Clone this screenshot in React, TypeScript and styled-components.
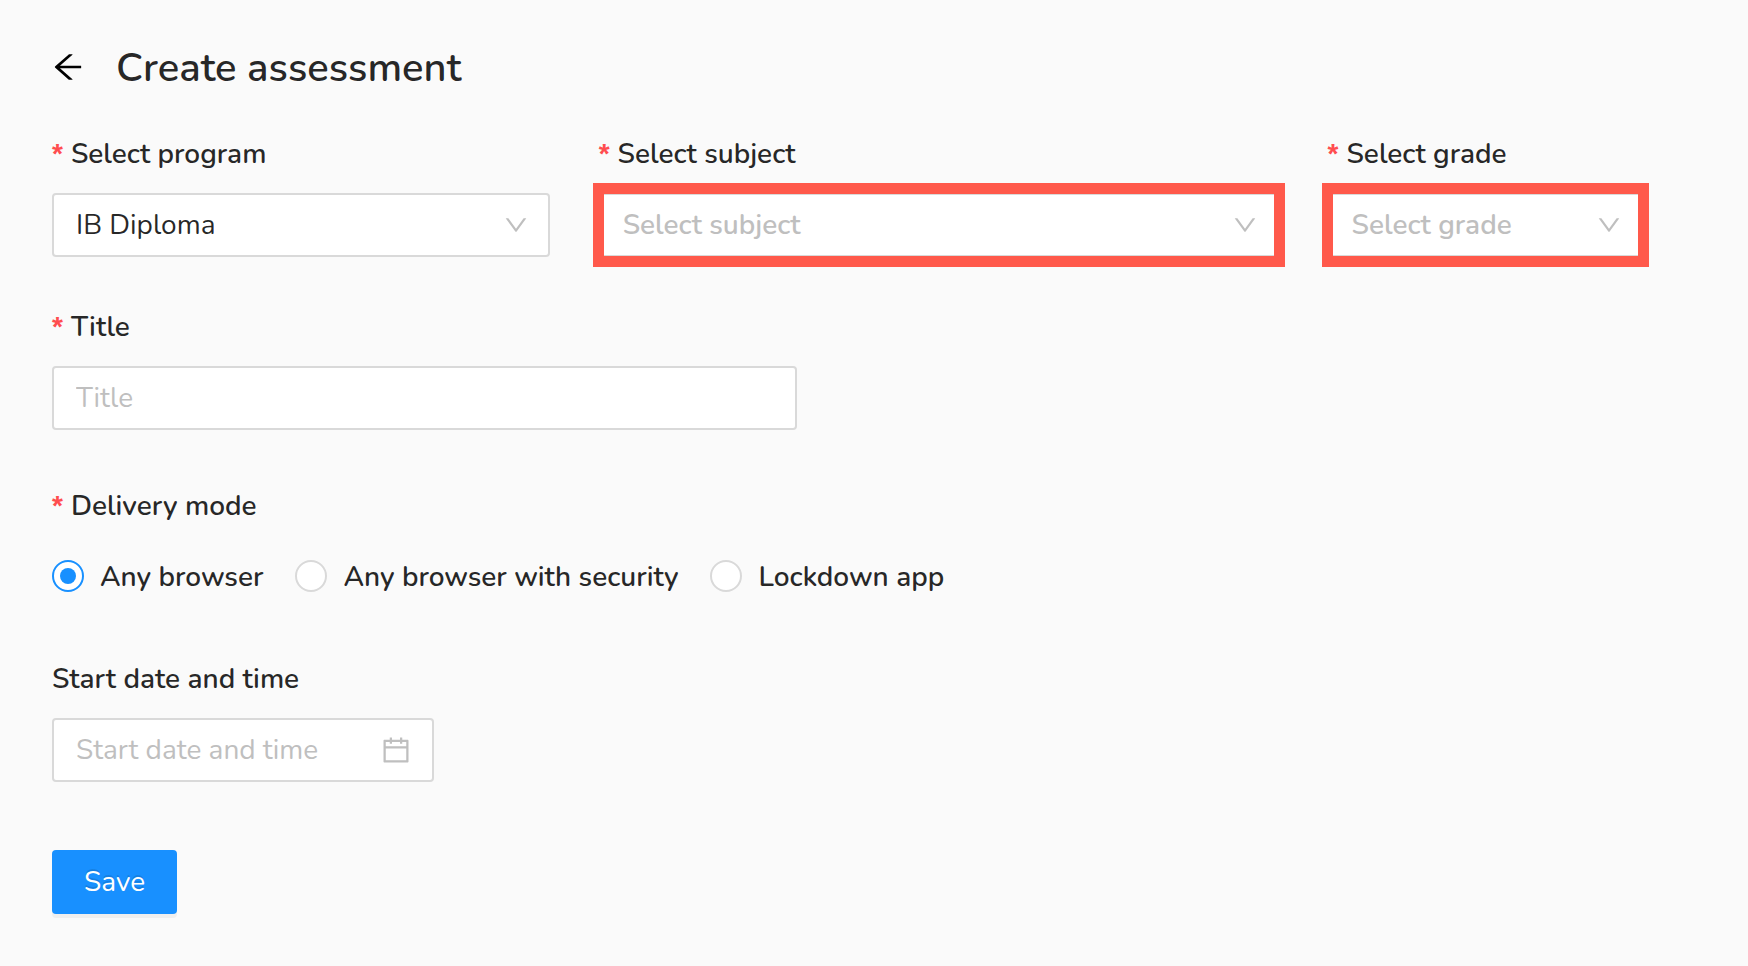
import React, { useState } from "react";
import styled, { createGlobalStyle } from "styled-components";

const colors = {
  page: "#fafafa",
  text: "rgba(0, 0, 0, 0.85)",
  placeholder: "#bfbfbf",
  border: "#d9d9d9",
  primary: "#1890ff",
  required: "#ff4d4f",
  highlight: "#ff594b",
};

const GlobalStyle = createGlobalStyle`
  *, *::before, *::after { box-sizing: border-box; }
  body {
    margin: 0;
    background: ${colors.page};
    color: ${colors.text};
    font-family: Nunito, Lato, sans-serif;
    font-size: 28px;
    line-height: 44px;
  }
  input, select, button { font: inherit; color: inherit; }
`;

const Page = styled.main`
  padding: 41px 56px 48px 52px;
`;

const Header = styled.header`
  display: flex;
  align-items: center;
  gap: 32px;
  margin-bottom: 37px;
`;

const BackButton = styled.button`
  display: flex;
  padding: 0 0 2px;
  border: 0;
  background: none;
  color: #000;
  cursor: pointer;
`;

const Heading = styled.h1`
  margin: 0;
  font-size: 40px;
  font-weight: 600;
  line-height: 54px;
`;

const Form = styled.form`
  display: flex;
  flex-direction: column;
`;

const FieldRow = styled.div`
  display: grid;
  grid-template-columns: 6fr 8fr 4fr;
`;

const Field = styled.div<{ $space?: number }>`
  min-width: 0;
  padding-right: 49px;
  margin-bottom: ${(p) => p.$space ?? 48}px;
`;

const RadioField = styled.fieldset`
  min-width: 0;
  margin: 0 0 48px;
  padding: 0;
  border: 0;
`;

const requiredMark = `
  &::before {
    content: "*";
    margin-right: 8px;
    color: ${colors.required};
    font-family: "Liberation Sans", sans-serif;
    line-height: 1;
  }
`;

const Label = styled.label<{ $required?: boolean }>`
  display: block;
  margin-bottom: 17px;
  font-weight: 600;
  ${(p) => p.$required && requiredMark}
`;

const ControlFrame = styled.div<{ $highlighted?: boolean; $width?: string }>`
  position: relative;
  display: flex;
  align-items: center;
  width: ${(p) => p.$width ?? "100%"};
  max-width: 100%;
  height: 64px;
  border: 2px solid ${colors.border};
  border-radius: 4px;
  background: #fff;
  color: ${colors.placeholder};

  ${(p) =>
    p.$highlighted &&
    `&::after {
      content: "";
      position: absolute;
      inset: -12px -8px;
      border: 11px solid ${colors.highlight};
      pointer-events: none;
    }`}
`;

const controlText = `
  flex: 1;
  min-width: 0;
  width: 100%;
  height: 100%;
  padding: 0 22px;
  border: 0;
  outline: 0;
  background: transparent;
`;

const SelectBox = styled.select<{ $empty: boolean }>`
  ${controlText}
  appearance: none;
  color: ${(p) => (p.$empty ? colors.placeholder : colors.text)};
  font-weight: ${(p) => (p.$empty ? 600 : 400)};

  option { color: #262626; }
`;

const TextBox = styled.input`
  ${controlText}
  color: ${colors.text};

  &::placeholder { color: ${colors.placeholder}; opacity: 1; }
`;

const ControlIcon = styled.span<{ $right: number }>`
  position: absolute;
  top: 0;
  bottom: 0;
  right: ${(p) => p.$right}px;
  display: flex;
  align-items: center;
  pointer-events: none;
`;

const RadioGroup = styled.div`
  display: flex;
  flex-wrap: wrap;
  align-items: center;
  column-gap: 32px;
  min-height: 64px;
`;

const RadioLabel = styled.label`
  display: flex;
  align-items: center;
  gap: 16px;
  font-weight: 600;
  cursor: pointer;
`;

const Radio = styled.input`
  appearance: none;
  display: grid;
  place-items: center;
  width: 32px;
  height: 32px;
  margin: 0 0 2px;
  border: 2px solid ${colors.border};
  border-radius: 50%;
  background: #fff;

  &:checked { border-color: ${colors.primary}; }
  &:checked::before {
    content: "";
    width: 16px;
    height: 16px;
    border-radius: 50%;
    background: ${colors.primary};
  }
`;

const SaveButton = styled.button`
  align-self: flex-start;
  height: 64px;
  padding: 0 32px;
  border: 0;
  border-radius: 4px;
  background: ${colors.primary};
  color: #fff;
  text-shadow: 0 -2px 0 rgba(0, 0, 0, 0.12);
  box-shadow: 0 4px 0 rgba(0, 0, 0, 0.045);
  cursor: pointer;
`;

const iconPaths = {
  back: "M872 474H286.9l350.2-304c5.6-4.9 2.2-14-5.2-14h-88.5c-3.9 0-7.6 1.4-10.5 3.9L155 487.8a31.96 31.96 0 000 48.3L535.1 866c1.5 1.3 3.3 2 5.2 2h91.5c7.4 0 10.8-9.2 5.2-14L286.9 550H872c4.4 0 8-3.6 8-8v-60c0-4.4-3.6-8-8-8z",
  down: "M884 256h-75c-5.1 0-9.9 2.5-12.9 6.6L512 654.2 227.9 262.6c-3-4.1-7.8-6.6-12.9-6.6h-75c-6.5 0-10.3 7.4-6.5 12.7l352.6 486.1c12.8 17.6 39 17.6 51.7 0l352.6-486.1c3.9-5.3.1-12.7-6.4-12.7z",
  calendar:
    "M880 184H712v-64c0-4.4-3.6-8-8-8h-56c-4.4 0-8 3.6-8 8v64H384v-64c0-4.4-3.6-8-8-8h-56c-4.4 0-8 3.6-8 8v64H144c-17.7 0-32 14.3-32 32v664c0 17.7 14.3 32 32 32h736c17.7 0 32-14.3 32-32V216c0-17.7-14.3-32-32-32zm-40 656H184V460h656v380zM184 392V256h128v48c0 4.4 3.6 8 8 8h56c4.4 0 8-3.6 8-8v-48h256v48c0 4.4 3.6 8 8 8h56c4.4 0 8-3.6 8-8v-48h128v136H184z",
};

function Icon({ name, size }: { name: keyof typeof iconPaths; size: number }) {
  return (
    <svg viewBox="64 64 896 896" width={size} height={size} fill="currentColor" aria-hidden="true">
      <path d={iconPaths[name]} />
    </svg>
  );
}

interface SelectFieldProps {
  id: string;
  label: string;
  options: string[];
  initial?: string;
  highlighted?: boolean;
}

function SelectField({ id, label, options, initial = "", highlighted }: SelectFieldProps) {
  const [value, setValue] = useState(initial);
  return (
    <Field>
      <Label htmlFor={id} $required>{label}</Label>
      <ControlFrame $highlighted={highlighted}>
        <SelectBox id={id} required value={value} $empty={!value} onChange={(e) => setValue(e.target.value)}>
          {!initial && <option value="" disabled>{label}</option>}
          {options.map((o) => <option key={o}>{o}</option>)}
        </SelectBox>
        <ControlIcon $right={20}><Icon name="down" size={24} /></ControlIcon>
      </ControlFrame>
    </Field>
  );
}

const deliveryModes = ["Any browser", "Any browser with security", "Lockdown app"];

export default function App() {
  const [mode, setMode] = useState(deliveryModes[0]);
  return (
    <>
      <GlobalStyle />
      <Page>
        <Header>
          <BackButton type="button" aria-label="Back"><Icon name="back" size={32} /></BackButton>
          <Heading>Create assessment</Heading>
        </Header>
        <Form onSubmit={(e) => e.preventDefault()}>
          <FieldRow>
            <SelectField id="program" label="Select program" options={["IB Diploma"]} initial="IB Diploma" />
            <SelectField id="subject" label="Select subject" options={[]} highlighted />
            <SelectField id="grade" label="Select grade" options={[]} highlighted />
          </FieldRow>
          <Field $space={54}>
            <Label htmlFor="title" $required>Title</Label>
            <ControlFrame $width="745px">
              <TextBox id="title" type="text" placeholder="Title" />
            </ControlFrame>
          </Field>
          <RadioField aria-labelledby="delivery-mode">
            <Label as="div" id="delivery-mode" $required>Delivery mode</Label>
            <RadioGroup>
              {deliveryModes.map((m) => (
                <RadioLabel key={m}>
                  <Radio type="radio" name="delivery" checked={mode === m} onChange={() => setMode(m)} />
                  {m}
                </RadioLabel>
              ))}
            </RadioGroup>
          </RadioField>
          <Field $space={68}>
            <Label htmlFor="start">Start date and time</Label>
            <ControlFrame $width="382px">
              <TextBox id="start" type="text" placeholder="Start date and time" />
              <ControlIcon $right={22}><Icon name="calendar" size={28} /></ControlIcon>
            </ControlFrame>
          </Field>
          <SaveButton type="submit">Save</SaveButton>
        </Form>
      </Page>
    </>
  );
}
